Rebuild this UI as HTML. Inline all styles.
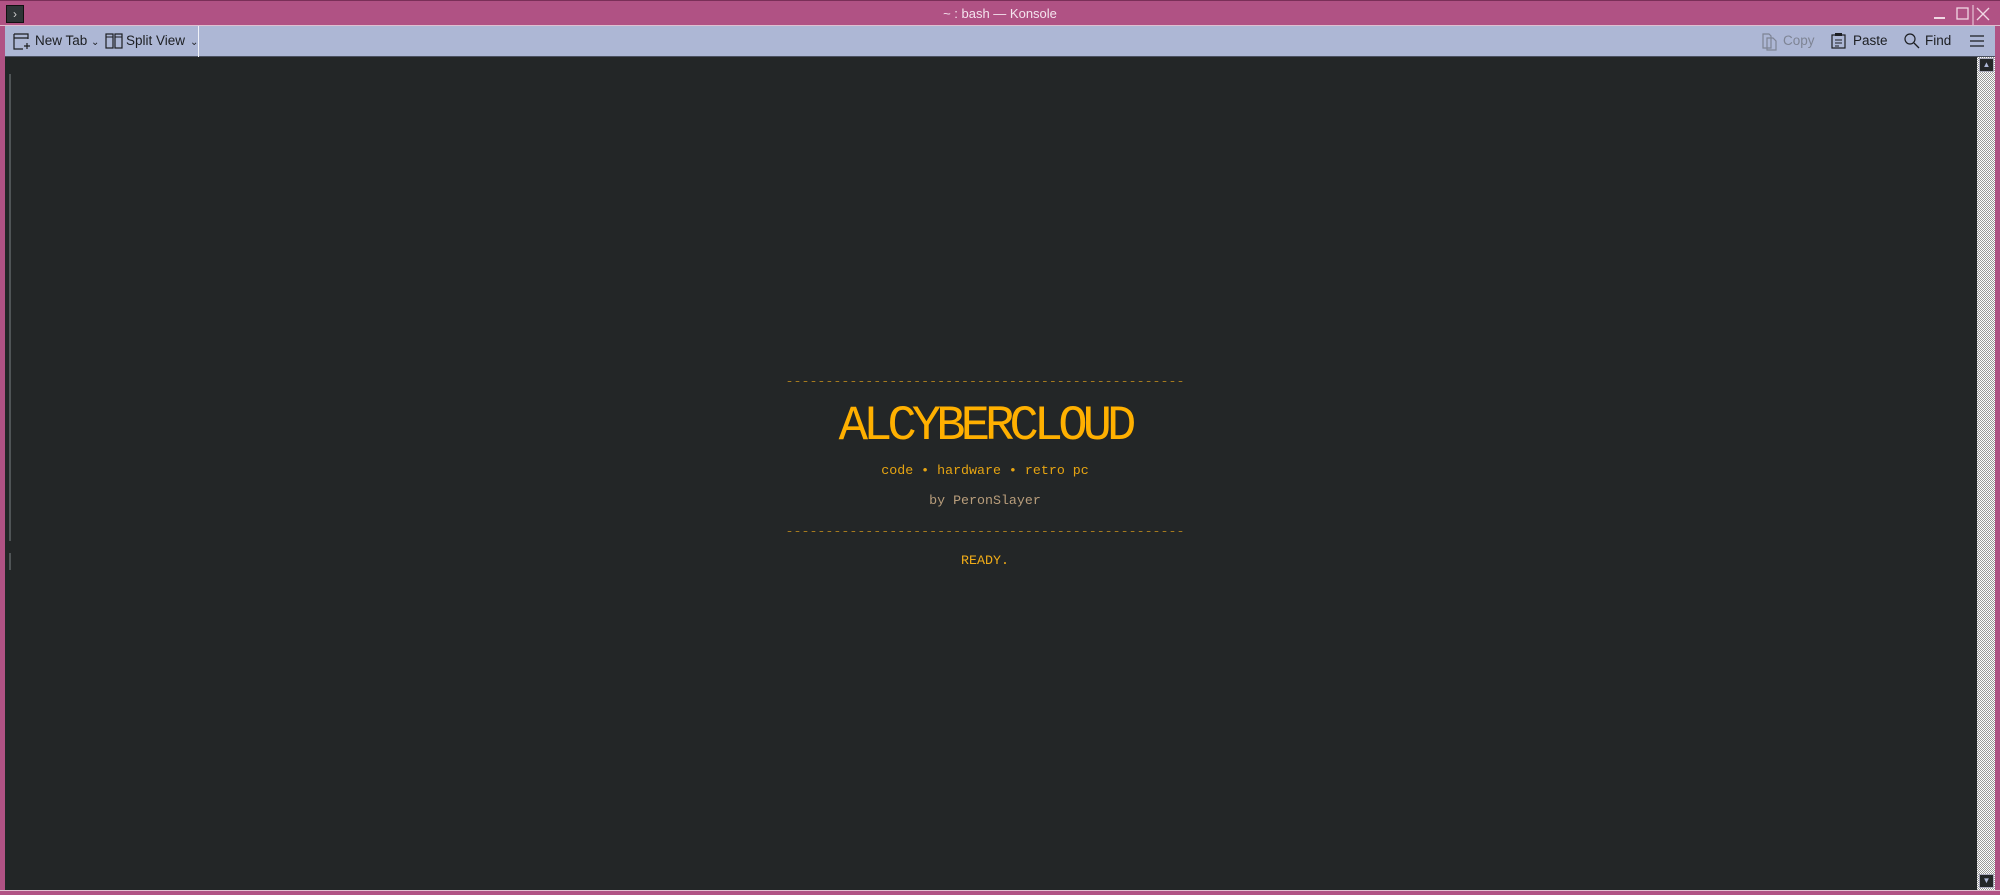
<!DOCTYPE html>
<html><head><meta charset="utf-8"><style>
*{margin:0;padding:0;box-sizing:border-box}
body{width:2000px;height:895px;overflow:hidden;background:#b05284;position:relative;font-family:"Liberation Sans","DejaVu Sans",sans-serif}
.abs{position:absolute}
#title{left:0;top:0;width:2000px;height:26px;background:#b05284;border-top:1px solid #7a2f58;border-bottom:1px solid #e0c0d0}
#title .t{left:0;width:2000px;top:5px;text-align:center;color:#f4e4ee;font-size:13px}
#menu{left:6px;top:5px;width:18px;height:18px;background:#2e3436;border:1px solid #111;color:#ccc;font-size:12px;text-align:center;line-height:16px}
#tb{left:5px;top:26px;width:1990px;height:31px;background:#adb7d5;border-bottom:1px solid #4a5060}
#tb span{position:absolute;top:7px;font-size:13.5px;color:#1c1e22}
#term{left:5px;top:57px;width:1972px;height:833px;background:#232627}
#sb{left:1977px;top:57px;width:18px;height:833px;background:repeating-conic-gradient(#fff 0 25%,#999 0 50%) 0 0/2px 2px}
.mono{font-family:"Liberation Mono","DejaVu Sans Mono",monospace;font-size:13.3px;white-space:pre;text-align:center;width:1970px;left:0}
</style></head><body>
<div id="title" class="abs"><div class="t abs">~ : bash — Konsole</div></div>
<div id="menu" class="abs">›</div>
<svg class="abs" style="left:1930px;top:5px" width="66" height="20">
<rect x="4" y="12" width="11" height="2" fill="#f0d8e4"/>
<rect x="27" y="3" width="11" height="11" fill="none" stroke="#f0d8e4" stroke-width="1.3"/>
<line x1="47" y1="3" x2="59" y2="15" stroke="#f0d8e4" stroke-width="1.3"/><line x1="59" y1="3" x2="47" y2="15" stroke="#f0d8e4" stroke-width="1.3"/>
<line x1="43" y1="0" x2="43" y2="20" stroke="#f0d8e4"/>
</svg>
<div id="tb" class="abs">
<svg class="abs" style="left:8px;top:7px" width="18" height="18"><path d="M1 1h14v5M1 1v15h9M1 5h14" fill="none" stroke="#1c1e22" stroke-width="1.2"/><path d="M14 10v6M11 13h6" stroke="#1c1e22" stroke-width="1.2"/></svg>
<span style="left:30px">New Tab</span><span style="left:86px;top:11px;font-size:10px">⌄</span>
<svg class="abs" style="left:100px;top:7px" width="18" height="18"><rect x="1" y="1" width="7" height="14" fill="none" stroke="#1c1e22" stroke-width="1.2"/><rect x="10" y="1" width="7" height="14" fill="none" stroke="#1c1e22" stroke-width="1.2"/><path d="M1 4h7M10 4h7" stroke="#1c1e22"/></svg>
<span style="left:121px">Split View</span><span style="left:185px;top:11px;font-size:10px">⌄</span>
<div class="abs" style="left:193px;top:0;width:1px;height:31px;background:#f0f2f8"></div>
<svg class="abs" style="left:1756px;top:7px" width="18" height="18"><path d="M2 1h6l2 2v12H2zM6 5h6l3 3v9H6z" fill="none" stroke="#7e8494" stroke-width="1.2"/></svg>
<span style="left:1778px;color:#7e8494">Copy</span>
<svg class="abs" style="left:1825px;top:6px" width="18" height="18"><rect x="2" y="3" width="13" height="13" fill="none" stroke="#1c1e22" stroke-width="1.2"/><rect x="5" y="1" width="7" height="3" fill="#1c1e22"/><path d="M5 8h7M5 11h7M5 14h4" stroke="#1c1e22"/></svg>
<span style="left:1848px">Paste</span>
<svg class="abs" style="left:1898px;top:6px" width="18" height="18"><circle cx="7" cy="7" r="5" fill="none" stroke="#1c1e22" stroke-width="1.2"/><path d="M11 11l5 5" stroke="#1c1e22" stroke-width="1.3"/></svg>
<span style="left:1920px">Find</span>
<svg class="abs" style="left:1964px;top:8px" width="16" height="14"><path d="M1 2h14M1 7h14M1 12h14" stroke="#1c1e22" stroke-width="1.2"/></svg>
</div>
<div id="term" class="abs">
<div class="abs" style="left:4px;top:17px;width:2px;height:467px;background:#4f5456"></div>
<div class="abs" style="left:4px;top:496px;width:2px;height:17px;background:#4f5456"></div>
</div>
<div id="sb" class="abs"></div>
<div class="abs" style="left:1979px;top:58px;width:15px;height:14px;background:#232627;border:1px solid #aab;color:#adb7d5;font-size:8px;text-align:center;line-height:12px">▲</div>
<div class="abs" style="left:1979px;top:874px;width:15px;height:14px;background:#232627;border:1px solid #aab;color:#adb7d5;font-size:8px;text-align:center;line-height:12px">▼</div>
<div class="abs" style="left:0;top:890px;width:2000px;height:5px;background:#b05284;border-top:1px solid #e0c0d0"></div>
<div class="abs mono" style="top:374px;color:#a57a1e">--------------------------------------------------</div>
<div class="abs" style="left:0;width:1970px;top:396px;text-align:center;font-family:'Liberation Mono',monospace;font-size:49px;color:#ffb000;letter-spacing:-5px;line-height:60px">ALCYBERCLOUD</div>
<div class="abs mono" style="top:463px;color:#e6a412">code • hardware • retro pc</div>
<div class="abs mono" style="top:493px;color:#b99e7c">by PeronSlayer</div>
<div class="abs mono" style="top:524px;color:#a57a1e">--------------------------------------------------</div>
<div class="abs mono" style="top:553px;color:#f2ad18">READY.</div>
</body></html>
